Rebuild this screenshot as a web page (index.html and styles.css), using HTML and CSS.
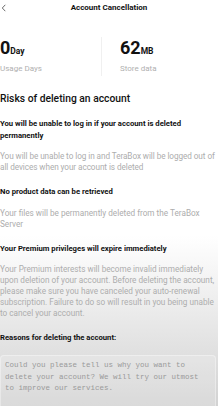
FILE: index.html
```html
<!DOCTYPE html>
<html>
<head>
<meta charset="utf-8">
<link rel="stylesheet" href="styles.css">
</head>
<body>
<div class="page">
  <div class="header">
    <span class="back"><svg width="6" height="8" viewBox="0 0 6 8"><path d="M4.3 0.8 L1.3 4 L4.3 7.2" fill="none" stroke="#444" stroke-width="0.8"/></svg></span>
    <span class="title">Account Cancellation</span>
    <span></span>
  </div>
  <div class="stats">
    <div class="stat">
      <div class="num">0<span class="unit">Day</span></div>
      <div class="label">Usage Days</div>
    </div>
    <div class="divider"></div>
    <div class="stat right">
      <div class="num">62<span class="unit">MB</span></div>
      <div class="label">Store data</div>
    </div>
  </div>
  <h2 class="risks">Risks of deleting an account</h2>
  <div class="item">
    <div class="item-title">You will be unable to log in if your account is deleted permanently</div>
    <div class="item-text tight">You will be unable to log in and TeraBox will be logged out of all devices when your account is deleted</div>
  </div>
  <div class="item">
    <div class="item-title">No product data can be retrieved</div>
    <div class="item-text">Your files will be permanently deleted from the TeraBox Server</div>
  </div>
  <div class="item">
    <div class="item-title">Your Premium privileges will expire immediately</div>
    <div class="item-text">Your Premium interests will become invalid immediately upon deletion of your account. Before deleting the account, please make sure you have canceled your auto-renewal subscription. Failure to do so will result in you being unable to cancel your account.</div>
  </div>
  <div class="reasons-title">Reasons for deleting the account:</div>
  <div class="reasons-box">Could you please tell us why you want to delete your account? We will try our utmost to improve our services.</div>
</div>
</body>
</html>
```
FILE: styles.css
```css
html, body {
  margin: 0;
  padding: 0;
}
body {
  font-family: Roboto, "Liberation Sans", sans-serif;
  width: 218px;
  height: 406px;
  overflow: hidden;
  background: linear-gradient(to bottom, #ffffff 0%, #ffffff 58%, #d2d2d2 100%);
}
.header {
  display: grid;
  grid-template-columns: 20px 1fr 20px;
  align-items: center;
  height: 15px;
}
.back {
  display: flex;
  padding-left: 1px;
  padding-top: 1px;
}
.title {
  text-align: center;
  font-size: 8px;
  font-weight: 700;
  color: #111;
}
.stats {
  display: grid;
  grid-template-columns: 101px 1px 1fr;
  margin-top: 24px;
}
.divider {
  background: #f0f0f0;
  margin-top: -2px;
  margin-bottom: -2px;
}
.stat.right {
  padding-left: 18px;
}
.num {
  font-size: 18px;
  font-weight: 700;
  color: #111;
  line-height: 18px;
}
.unit {
  font-size: 8.5px;
}
.label {
  font-size: 8px;
  color: #b0b0b0;
  margin-top: 4px;
  line-height: 10px;
}
.risks {
  margin: 18px 0 0 0;
  font-size: 10.3px;
  font-weight: 500;
  color: #111;
  line-height: 13px;
}
.item {
  margin-top: 12.5px;
}
.item + .item {
  margin-top: 13px;
}
.item-title {
  font-size: 7.7px;
  font-weight: 700;
  color: #111;
  line-height: 12px;
}
.item-text {
  margin-top: 9.5px;
  font-size: 8.2px;
  color: #adadad;
  line-height: 11px;
}
.item-text.tight {
  letter-spacing: -0.07px;
}
.reasons-title {
  margin-top: 13px;
  font-size: 7.7px;
  font-weight: 700;
  color: #111;
  line-height: 12px;
}
.reasons-box {
  margin-top: 11px;
  margin-right: 2px;
  border: 1px solid rgba(255, 255, 255, 0.35);
  border-radius: 4px;
  padding: 4px 4px;
  font-family: "Liberation Mono", monospace;
  font-size: 7.5px;
  line-height: 11.5px;
  color: #9a9a9a;
  height: 60px;
  background: rgba(255, 255, 255, 0.18);
}
```
